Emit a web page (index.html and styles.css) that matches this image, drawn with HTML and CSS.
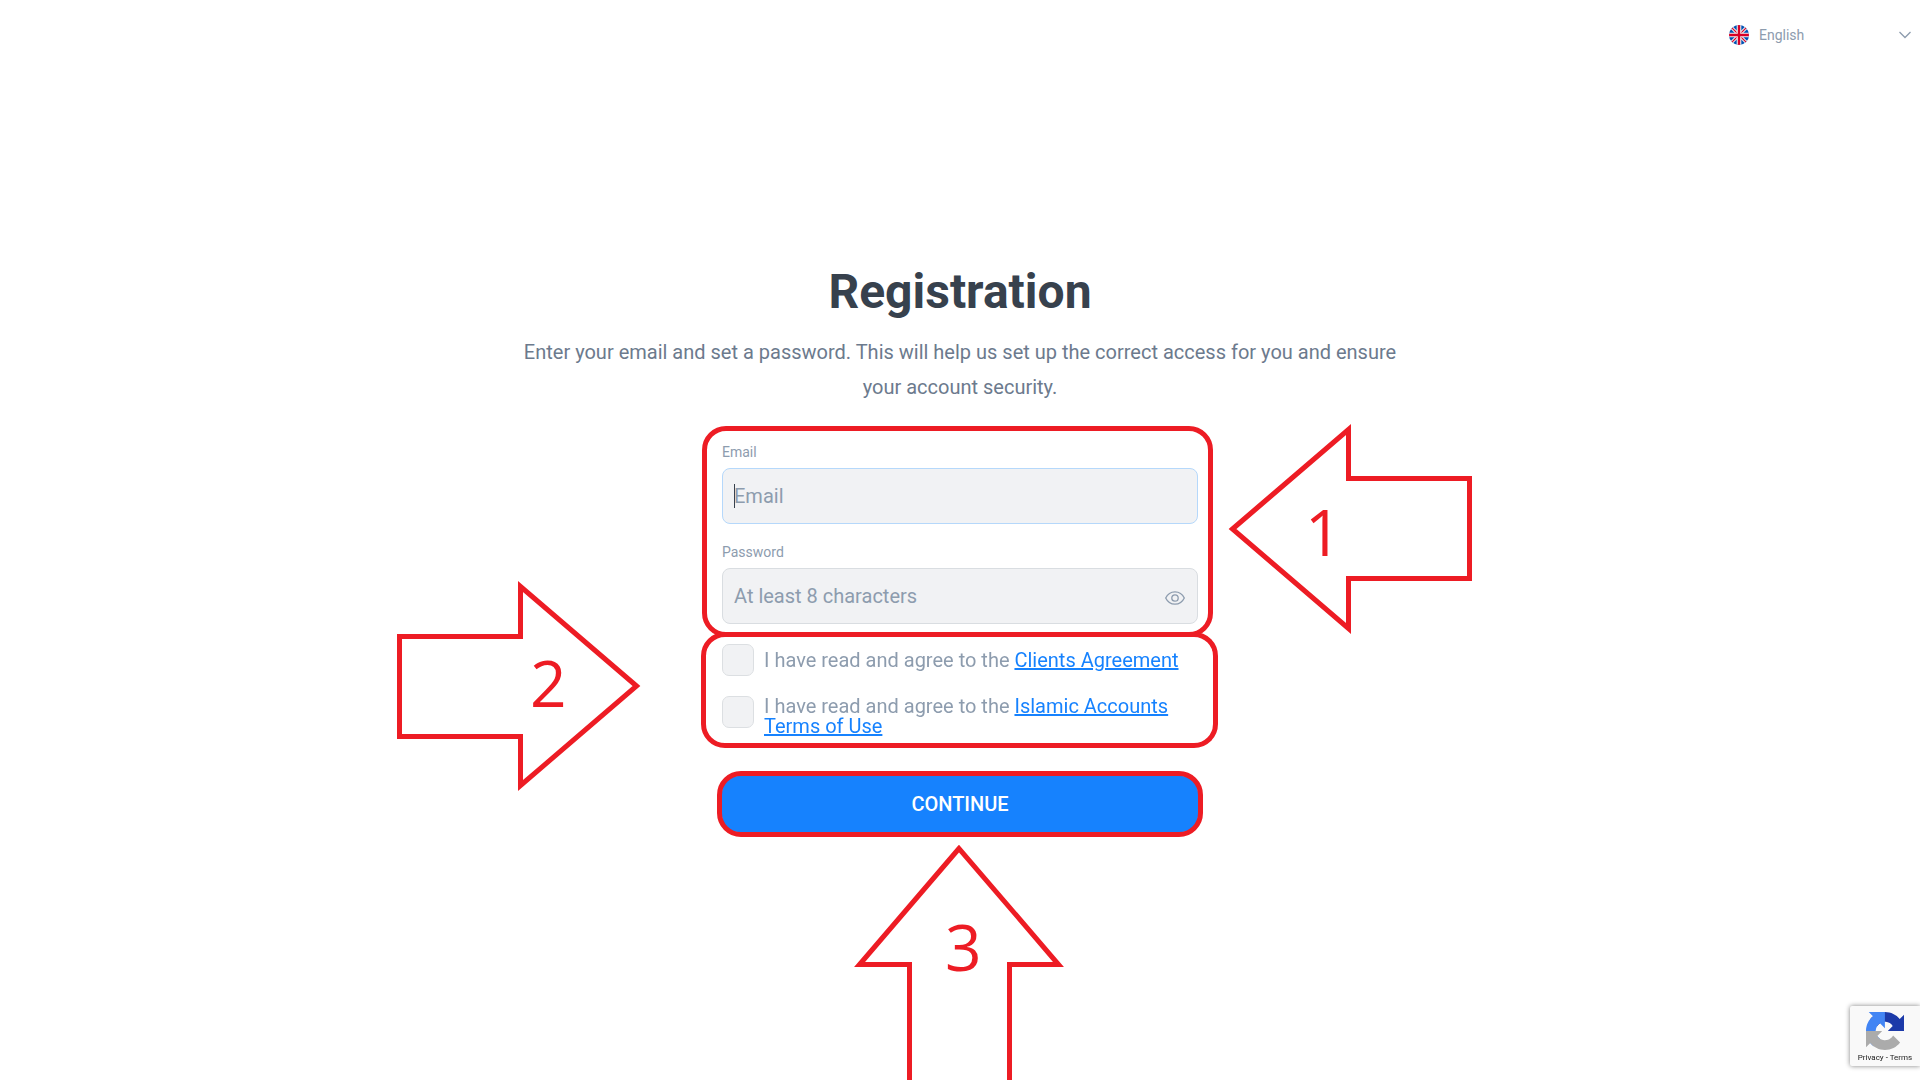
FILE: index.html
```html
<!DOCTYPE html>
<html lang="en">

<head>
    <meta charset="UTF-8">
    <meta name="viewport" content="width=device-width, initial-scale=1.0">
    <title>Registration</title>
    <link rel="stylesheet" href="styles.css">
</head>

<body>
    <header class="topbar">
        <div class="language">
            <svg class="flag" viewBox="0 0 20 20" aria-hidden="true">
                <clipPath id="round"><circle cx="10" cy="10" r="10" /></clipPath>
                <g clip-path="url(#round)">
                    <rect width="20" height="20" fill="#0052b4" />
                    <path d="M0 0l20 20M20 0L0 20" stroke="#f0f0f0" stroke-width="3.2" />
                    <path d="M0 0l20 20M20 0L0 20" stroke="#d80027" stroke-width="1.2" />
                    <path d="M10 0v20M0 10h20" stroke="#f0f0f0" stroke-width="4.6" />
                    <path d="M10 0v20M0 10h20" stroke="#d80027" stroke-width="2.4" />
                </g>
            </svg>
            <select class="language-select" aria-label="Language">
                <option>English</option>
            </select>
            <svg class="chevron" viewBox="0 0 12 8" aria-hidden="true">
                <path d="M.5 1L6 6.500 11.500 1" fill="none" stroke="#8d9cae" stroke-width="1.3" />
            </svg>
        </div>
    </header>

    <main class="registration">
        <h1>Registration</h1>
        <p class="intro">Enter your email and set a password. This will help us set up the correct access for you and
            ensure your account security.</p>

        <form class="form">
            <!-- Step 1 -->
            <section class="step credentials">
                <div class="field">
                    <label for="email">Email</label>
                    <input class="text-input" type="email" id="email" placeholder="Email" autofocus>
                </div>
                <div class="field">
                    <label for="password">Password</label>
                    <div class="password-box">
                        <input class="text-input" type="password" id="password" placeholder="At least 8 characters">
                        <button type="button" class="show-password" aria-label="Show password">
                            <svg viewBox="0 0 20 14" aria-hidden="true">
                                <g fill="none" stroke="#8d9cae" stroke-width="1.3">
                                    <path d="M.7 7C2.500 3.200 5.800.8 10 .8S17.500 3.200 19.300 7C17.500 10.800 14.200 13.200 10 13.200S2.500 10.800.7 7z" />
                                    <circle cx="10" cy="7" r="3.200" />
                                </g>
                            </svg>
                        </button>
                    </div>
                </div>
                <div class="outline outline-credentials"></div>
                <svg class="arrow arrow-one" viewBox="0 0 243 210">
                    <path d="M3.500 105L119.500 5.500V54.500H240.500V154.500H119.500V204.500z" />
                    <text x="76" y="132">1</text>
                </svg>
            </section>

            <!-- Step 2 -->
            <section class="step agreements">
                <div class="agreement">
                    <input type="checkbox" id="clients">
                    <label for="clients">I have read and agree to the <a href="#">Clients Agreement</a></label>
                </div>
                <div class="agreement">
                    <input type="checkbox" id="islamic">
                    <label for="islamic">I have read and agree to the <a href="#">Islamic Accounts Terms of Use</a></label>
                </div>
                <div class="outline outline-agreements"></div>
                <svg class="arrow arrow-two" viewBox="0 0 243 210">
                    <path d="M239.500 105L123.500 5.500V55.500H2.500V155.500H123.500V204.500z" />
                    <text x="133" y="126">2</text>
                </svg>
            </section>

            <!-- Step 3 -->
            <section class="step">
                <button type="submit" class="continue">CONTINUE</button>
                <div class="outline outline-continue"></div>
                <svg class="arrow arrow-three" viewBox="0 0 210 243">
                    <path d="M105 3.500L5.500 119.500H55.500V260H155.500V119.500H204.500z" />
                    <text x="91" y="126">3</text>
                </svg>
            </section>
        </form>
    </main>

    <aside class="recaptcha">
        <svg class="recaptcha-logo" viewBox="0 0 64 64" aria-hidden="true">
            <path fill="#1c3aa9" d="M64 31.955l-.033-1.370V4.687l-7.160 7.160C50.948 4.674 42.033.093 32.050.093c-10.400 0-19.622 4.960-25.458 12.640l11.736 11.860a15.550 15.550 0 0 1 4.754-5.334c2.050-1.600 4.952-2.906 8.968-2.906.485 0 .860.057 1.135.163 4.976.393 9.288 3.140 11.828 7.124l-8.307 8.307L64 31.953" />
            <path fill="#4285f4" d="M31.862.094l-1.370.033H4.594l7.160 7.160C4.580 13.147 0 22.060 0 32.046c0 10.400 4.960 19.622 12.640 25.458L24.500 45.768a15.550 15.550 0 0 1-5.334-4.754c-1.600-2.050-2.906-4.952-2.906-8.968 0-.485.057-.860.163-1.135.393-4.976 3.140-9.288 7.124-11.828l8.307 8.307L31.860.095" />
            <path fill="#ababab" d="M.001 32.045l.033 1.370v25.898l7.160-7.160c5.860 7.173 14.774 11.754 24.760 11.754 10.400 0 19.622-4.960 25.458-12.640l-11.736-11.860a15.550 15.550 0 0 1-4.754 5.334c-2.050 1.600-4.952 2.906-8.968 2.906-.485 0-.860-.057-1.135-.163-4.976-.393-9.288-3.140-11.828-7.124l8.307-8.307c-10.522.040-22.400.066-27.295-.005" />
        </svg>
        <div class="recaptcha-links"><a href="#">Privacy</a> - <a href="#">Terms</a></div>
    </aside>
</body>

</html>
```

FILE: styles.css
```css
* {
    box-sizing: border-box;
}

body {
    margin: 0;
    min-height: 100vh;
    overflow: hidden;
    font-family: Roboto, "Liberation Sans", sans-serif;
    font-size: 20px;
    color: #8d9cae;
    background-color: #fff;
}

.topbar {
    display: flex;
    justify-content: flex-end;
    padding: 20px 9px;
}

.language {
    display: flex;
    align-items: center;
    gap: 10px;
    width: 182px;
    height: 30px;
}

.flag {
    width: 20px;
    height: 20px;
}

.language-select {
    flex: 1;
    padding: 0;
    border: none;
    appearance: none;
    background: none;
    font-family: inherit;
    font-size: 14px;
    color: inherit;
}

.chevron {
    width: 12px;
    height: 8px;
}

.registration {
    display: flex;
    flex-direction: column;
    align-items: center;
    padding-top: 194px;
}

h1 {
    margin: 0 0 15px;
    font-size: 48px;
    line-height: 56px;
    font-weight: 700;
    color: #37414d;
}

.intro {
    max-width: 900px;
    margin: 0;
    line-height: 35px;
    text-align: center;
    color: #6c7a8d;
}

.form {
    width: 476px;
    max-width: 100%;
    padding-top: 39px;
}

.step {
    position: relative;
}

.credentials,
.agreements {
    display: flex;
    flex-direction: column;
    gap: 20px;
}

.field {
    display: flex;
    flex-direction: column;
}

.field label {
    padding-bottom: 8px;
    font-size: 14px;
    line-height: 16px;
}

.text-input {
    width: 100%;
    height: 56px;
    padding: 0 11px;
    border: 1px solid #d9dde1;
    border-radius: 8px;
    outline: none;
    background-color: #f1f2f4;
    font-family: inherit;
    font-size: 20px;
    color: #37414d;
}

.text-input:focus {
    border-color: #b5d8fb;
}

/* Steady caret while the focused field is empty */
.text-input:focus:placeholder-shown {
    caret-color: transparent;
    background-image: linear-gradient(#37414d, #37414d);
    background-position: 11px center;
    background-repeat: no-repeat;
    background-size: 1px 24px;
}

.text-input::placeholder {
    color: #8d9cae;
}

.password-box {
    position: relative;
}

.show-password {
    position: absolute;
    top: 17px;
    right: 11px;
    display: flex;
    padding: 6px 2px;
    border: none;
    background: none;
}

.show-password svg {
    width: 20px;
    height: 14px;
}

.agreements {
    padding-top: 20px;
}

.agreement {
    display: flex;
    align-items: center;
    gap: 10px;
    line-height: 20px;
}

.agreement input {
    flex-shrink: 0;
    align-self: flex-start;
    width: 32px;
    height: 32px;
    margin: 0;
    border: 1px solid #dcdfe2;
    border-radius: 7px;
    appearance: none;
    background-color: #f1f2f4;
}

.agreement a {
    color: #1682fe;
}

.continue {
    display: block;
    width: 100%;
    height: 56px;
    margin-top: 40px;
    border: none;
    border-radius: 16px;
    background-color: #1682fe;
    font-family: inherit;
    font-size: 20px;
    font-weight: 500;
    color: #fff;
}

/* Step highlights */
.outline {
    position: absolute;
    border: 5px solid #ed1c24;
    border-radius: 24px;
    pointer-events: none;
}

.outline-credentials {
    inset: -18px -15px -13px -20px;
}

.outline-agreements {
    inset: 8px -20px -12px -21px;
}

.outline-continue {
    inset: -5px;
}

.arrow {
    position: absolute;
    width: 243px;
    height: 210px;
    overflow: visible;
    pointer-events: none;
}

.arrow path {
    fill: none;
    stroke: #ed1c24;
    stroke-width: 5;
    stroke-miterlimit: 10;
}

.arrow text {
    fill: #ed1c24;
    font-family: "Open Sans", "Noto Sans", sans-serif;
    font-size: 64px;
}

.arrow-one {
    top: -20px;
    left: calc(100% + 31px);
}

.arrow-two {
    top: -43px;
    right: calc(100% + 82px);
}

.arrow-three {
    top: calc(100% + 13px);
    left: calc(50% - 106px);
    width: 210px;
    height: 243px;
}

.recaptcha {
    position: fixed;
    right: 0;
    bottom: 14px;
    display: flex;
    flex-direction: column;
    align-items: center;
    width: 70px;
    height: 60px;
    padding-top: 6px;
    border-radius: 2px 0 0 2px;
    box-shadow: 0 0 5px gray;
    background-color: #f9f9f9;
}

.recaptcha-logo {
    width: 38px;
    height: 38px;
}

.recaptcha-links {
    font-size: 8px;
    line-height: 16px;
    color: #000;
}

.recaptcha-links a {
    color: #222;
    text-decoration: none;
}
```
